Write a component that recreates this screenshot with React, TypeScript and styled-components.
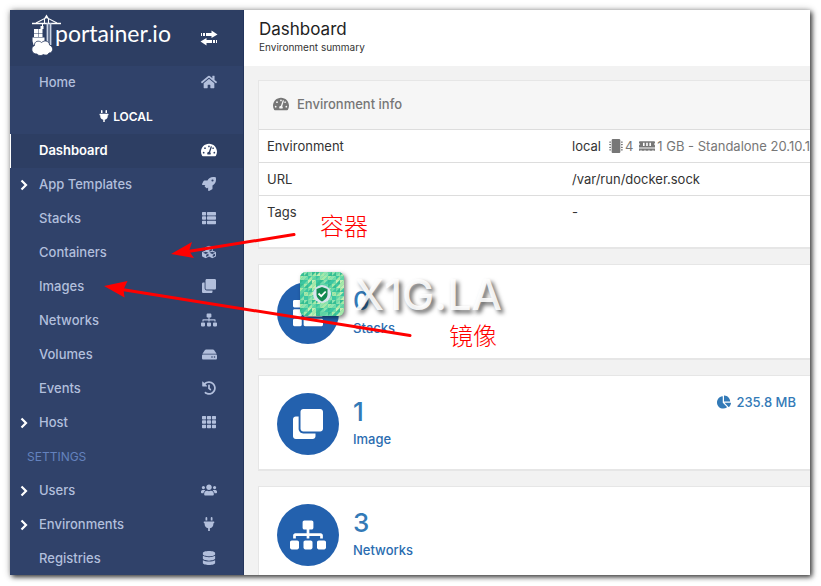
import React from 'react';
import styled, { createGlobalStyle, css } from 'styled-components';
import type { IconType } from 'react-icons';
import {
  FaChartPie,
  FaClone,
  FaCubes,
  FaDatabase,
  FaHdd,
  FaHistory,
  FaHome,
  FaMemory,
  FaMicrochip,
  FaPlug,
  FaRocket,
  FaSitemap,
  FaTachometerAlt,
  FaTh,
  FaThList,
  FaUsers,
} from 'react-icons/fa';

const GlobalStyle = createGlobalStyle`
  * { box-sizing: border-box; }
  body {
    margin: 0;
    background: #fff;
    font-family: Inter, "Noto Sans CJK SC", sans-serif;
    font-size: 13px;
    color: #333;
  }
  a { color: inherit; text-decoration: none; }
`;

const Page = styled.div`
  position: relative;
  height: 100vh;
  padding: 10px 11px 11px 10px;
  overflow: hidden;
`;

const Window = styled.div`
  display: grid;
  grid-template-columns: 234px minmax(0, 1fr);
  height: 100%;
  overflow: hidden;
  background: #f2f2f2;
  box-shadow: 0 0 7px rgba(0, 0, 0, 0.25), 2px 2px 5px rgba(0, 0, 0, 0.75);
`;

const Sidebar = styled.nav`
  overflow: hidden;
  background: #30426a;
  border-right: 1px solid #24355c;
`;

const SidebarHeader = styled.div`
  display: flex;
  align-items: center;
  justify-content: space-between;
  height: 56px;
  padding: 0 25px 0 20px;
  background: #2d3e63;
`;

const Brand = styled.a`
  display: flex;
  align-items: center;
  color: #fff;
`;

const BrandName = styled.span`
  margin: 0 0 10px -7px;
  font: 400 23px/28px Lato, sans-serif;
  color: #fff;
`;

const ToggleButton = styled.button`
  display: flex;
  padding: 0;
  border: 0;
  background: none;
  color: #fff;
`;

const Menu = styled.ul`
  margin: 0;
  padding: 0;
  list-style: none;
`;

const MenuLink = styled.a<{ $active?: boolean }>`
  display: grid;
  grid-template-columns: 19px 1fr 18px;
  align-items: center;
  height: 34px;
  padding: 0 25px 2px 10px;
  font-weight: 500;
  color: #b2bfdc;
  ${({ $active }) =>
    $active &&
    css`
      background: #2d3e63;
      box-shadow: inset 1px 0 #fff;
      font-weight: 600;
      color: #fff;
    `}
  > svg {
    justify-self: center;
  }
`;

const Marker = styled.span`
  display: flex;
  padding-top: 2px;
`;

const Endpoint = styled.li`
  display: flex;
  align-items: center;
  justify-content: center;
  gap: 3px;
  height: 34px;
  padding: 0 2px 2px 0;
  font-size: 12px;
  font-weight: 600;
  color: #fff;
`;

const SectionTitle = styled.li`
  height: 34px;
  padding-left: 17px;
  font-size: 12px;
  line-height: 33px;
  color: #6482be;
`;

const Main = styled.main`
  min-width: 0;
  overflow: hidden;
`;

const PageHeader = styled.header`
  height: 56px;
  padding: 9px 15px;
  background: #fff;
`;

const PageTitle = styled.h1`
  margin: 0;
  font-size: 17px;
  font-weight: 400;
  line-height: 20px;
  color: #222;
`;

const PageSubtitle = styled.div`
  font-size: 10px;
  line-height: 16px;
`;

const Content = styled.div`
  display: flex;
  flex-direction: column;
  gap: 15px;
  padding: 14px 0 0 14px;
`;

const Widget = styled.section`
  background: #fff;
  border: 1px solid #e6e6e6;
  border-right: 0;
  border-bottom: 2px solid #e6e6e6;
`;

const WidgetHeader = styled.h2`
  display: flex;
  align-items: center;
  gap: 8px;
  height: 48px;
  margin: 0;
  padding: 0 14px 2px;
  background: #f6f6f6;
  font-size: 13px;
  font-weight: 500;
  color: #767676;
`;

const InfoTable = styled.table`
  width: 100%;
  table-layout: fixed;
  border-collapse: collapse;
  margin-bottom: 18px;

  th,
  td {
    height: 33px;
    padding: 0 0 0 8px;
    border-top: 1px solid #ddd;
    font-weight: 400;
    text-align: left;
    white-space: nowrap;
    overflow: hidden;
    color: #333;
  }
  th {
    width: 305px;
  }
`;

const Specs = styled.div`
  display: flex;
  align-items: center;
  gap: 2px;
  color: #777;
`;

const SpecName = styled.span`
  margin-right: 6px;
  color: #333;
`;

const SpecValue = styled.span`
  margin-right: 4px;
`;

const StatLink = styled.a`
  display: flex;
  gap: 14px;
  height: 93px;
  padding: 17px 14px 0 18px;
  color: #2a6cb0;
`;

const StatIcon = styled.span`
  display: grid;
  place-items: center;
  flex: none;
  width: 62px;
  height: 62px;
  border-radius: 50%;
  background: #2361ae;
  color: #fff;
`;

const StatText = styled.span`
  display: flex;
  flex: 1;
  flex-direction: column;
  padding-top: 2px;
`;

const StatCount = styled.span`
  font-size: 26px;
  font-weight: 500;
  line-height: 34px;
  color: #337ab7;
`;

const StatLabel = styled.span`
  font-weight: 500;
  line-height: 20px;
`;

const StatNote = styled.span`
  display: flex;
  align-items: center;
  align-self: flex-start;
  gap: 5px;
  font-weight: 500;
  line-height: 18px;
  color: #337ab7;
`;

const Arrows = styled.svg`
  position: absolute;
  top: 0;
  left: 0;
  pointer-events: none;
`;

const Note = styled.span<{ $x: number; $y: number }>`
  position: absolute;
  left: ${({ $x }) => $x}px;
  top: ${({ $y }) => $y}px;
  font: 300 24px/32px "Noto Sans CJK SC", sans-serif;
  color: #f00;
`;

const Watermark = styled.div`
  position: absolute;
  left: 300px;
  top: 269px;
  display: flex;
  align-items: center;
  gap: 10px;
  height: 50px;
  font-size: 43px;
  font-weight: 500;
  color: rgba(255, 255, 255, 0.9);
  text-shadow: 3px 3px 4px rgba(0, 0, 0, 0.6);

  svg {
    filter: drop-shadow(2px 2px 2px rgba(0, 0, 0, 0.5));
  }
`;

const CraneLogo = () => (
  <svg width="32" height="48" viewBox="0 0 32 48" fill="none" stroke="#fff" aria-hidden="true">
    <path d="M2 9.500h29" strokeWidth="1.500" />
    <path d="M6 9 16.500 3.500 27 9M14.500 9V5l2-3.500 2 3.500v4" strokeWidth="1.100" />
    <path d="M17.500 9v22M20.500 9v22" strokeWidth="1.800" stroke="#c9d2e4" />
    <path d="M12.500 10v4" />
    <g fill="#fff" stroke="none">
      <path d="M4 15h4v4H4zM8.500 15h4v4h-4zM4 19.500h4v3.500H4zM8.500 19.500h4v3.500h-4zM10.500 12h3v3h-3z" />
      <path d="M2.500 23.500h12v3.500l-1 4h-10l-1-4z" />
    </g>
    <path
      d="M7 40c-5.500.5-7-7-2.500-8.500C4 27 9 26 11.500 28.500 15 25.500 19.500 27.500 19.500 31c4.500 1.500 4 8-.5 8-1.500 2.500-3.800 2.500-5.500 1.500-2 1.500-5 1.500-6.500-.5z"
      fill="#fff"
      stroke="#2d3e63"
      strokeWidth=".8"
    />
  </svg>
);

const TransferIcon = () => (
  <svg width="18" height="16" viewBox="0 0 18 16" fill="currentColor" aria-hidden="true">
    <path d="M1 3h1v3H1zM3 3h2v3H3zM6 3h5.500V.5L17.500 4.500 11.500 8V6H6zM16 10h1v3h-1zM13 10h2v3h-2zM12 10H6.500V8L.5 11.500l6 4V13H12z" />
  </svg>
);

const Chevron = () => (
  <svg width="8" height="12" viewBox="0 0 8 12" fill="none" stroke="#fff" strokeWidth="2.200" aria-hidden="true">
    <path d="m1.500 1.500 4.500 4.500-4.500 4.500" />
  </svg>
);

const MOSAIC = ['#5fd3a4', '#8fe3b0', '#35bd93', '#c2eeb4', '#6fdbaa', '#3cc6a2', '#a5e8a8'];

const ShieldLogo = () => (
  <svg width="44" height="44" viewBox="0 0 44 44" aria-hidden="true">
    <clipPath id="tile">
      <rect width="44" height="44" rx="6" />
    </clipPath>
    <g clipPath="url(#tile)">
      <rect width="44" height="44" fill="#4ccb98" />
      {Array.from({ length: 121 }, (_, i) => {
        const x = (i % 11) * 4;
        const y = Math.floor(i / 11) * 4;
        return (
          <React.Fragment key={i}>
            <path d={`M${x} ${y}h4l-4 4z`} fill={MOSAIC[(i * i + y) % 7]} />
            <path d={`M${x + 4} ${y}v4h-4z`} fill={MOSAIC[(i * i * 3 + x + 2) % 7]} />
          </React.Fragment>
        );
      })}
    </g>
    <circle cx="22" cy="22" r="9" fill="#d9e4ee" />
    <path d="m22 15 5.500 2v5c0 4-3 6-5.500 7.500-2.500-1.500-5.500-3.500-5.500-7.500v-5z" fill="#128a51" />
    <path d="m18.500 21.500 2.700 2.700 4.500-4.700" fill="none" stroke="#fff" strokeWidth="1.800" />
  </svg>
);

type Entry = { label: string; icon: IconType; size?: number; expandable?: boolean; active?: boolean };

const mainEntries: Entry[] = [
  { label: 'Dashboard', icon: FaTachometerAlt, size: 16, active: true },
  { label: 'App Templates', icon: FaRocket, expandable: true },
  { label: 'Stacks', icon: FaThList },
  { label: 'Containers', icon: FaCubes },
  { label: 'Images', icon: FaClone },
  { label: 'Networks', icon: FaSitemap, size: 16 },
  { label: 'Volumes', icon: FaHdd, size: 15 },
  { label: 'Events', icon: FaHistory },
  { label: 'Host', icon: FaTh, expandable: true },
];

const settingsEntries: Entry[] = [
  { label: 'Users', icon: FaUsers, size: 16, expandable: true },
  { label: 'Environments', icon: FaPlug, expandable: true },
  { label: 'Registries', icon: FaDatabase },
];

const MenuItem = ({ label, icon: Icon, size = 14, expandable, active }: Entry) => (
  <li>
    <MenuLink href="#" $active={active} aria-current={active ? 'page' : undefined}>
      <Marker>{expandable && <Chevron />}</Marker>
      <span>{label}</span>
      <Icon size={size} />
    </MenuLink>
  </li>
);

const stats = [
  { count: 0, label: 'Stacks', icon: FaThList, size: 30 },
  { count: 1, label: 'Image', icon: FaClone, size: 30, note: '235.8 MB' },
  { count: 3, label: 'Networks', icon: FaSitemap, size: 36 },
];

export default function App() {
  return (
    <Page>
      <GlobalStyle />
      <Window>
        <Sidebar>
          <SidebarHeader>
            <Brand href="#">
              <CraneLogo />
              <BrandName>portainer.io</BrandName>
            </Brand>
            <ToggleButton type="button" aria-label="Toggle sidebar">
              <TransferIcon />
            </ToggleButton>
          </SidebarHeader>
          <Menu>
            <MenuItem label="Home" icon={FaHome} size={16} />
            <Endpoint>
              <FaPlug size={12} />
              LOCAL
            </Endpoint>
            {mainEntries.map((entry) => (
              <MenuItem key={entry.label} {...entry} />
            ))}
            <SectionTitle>SETTINGS</SectionTitle>
            {settingsEntries.map((entry) => (
              <MenuItem key={entry.label} {...entry} />
            ))}
          </Menu>
        </Sidebar>
        <Main>
          <PageHeader>
            <PageTitle>Dashboard</PageTitle>
            <PageSubtitle>Environment summary</PageSubtitle>
          </PageHeader>
          <Content>
            <Widget>
              <WidgetHeader>
                <FaTachometerAlt size={16} />
                Environment info
              </WidgetHeader>
              <InfoTable>
                <tbody>
                  <tr>
                    <th scope="row">Environment</th>
                    <td>
                      <Specs>
                        <SpecName>local</SpecName>
                        <FaMicrochip size={14} />
                        <SpecValue>4</SpecValue>
                        <FaMemory size={16} />
                        <span>1 GB - Standalone 20.10.1</span>
                      </Specs>
                    </td>
                  </tr>
                  <tr>
                    <th scope="row">URL</th>
                    <td>/var/run/docker.sock</td>
                  </tr>
                  <tr>
                    <th scope="row">Tags</th>
                    <td>-</td>
                  </tr>
                </tbody>
              </InfoTable>
            </Widget>
            {stats.map(({ count, label, icon: Icon, size, note }) => (
              <Widget key={label}>
                <StatLink href="#">
                  <StatIcon>
                    <Icon size={size} />
                  </StatIcon>
                  <StatText>
                    <StatCount>{count}</StatCount>
                    <StatLabel>{label}</StatLabel>
                  </StatText>
                  {note && (
                    <StatNote>
                      <FaChartPie size={14} />
                      {note}
                    </StatNote>
                  )}
                </StatLink>
              </Widget>
            ))}
          </Content>
        </Main>
      </Window>
      <Watermark>
        <ShieldLogo />
        X1G.LA
      </Watermark>
      <Arrows width="420" height="350" viewBox="0 0 420 350" aria-hidden="true">
        <g stroke="#f00" strokeWidth="3" strokeLinecap="round">
          <path d="M294 234.500 188 251.500" />
          <path d="M410 335.500 122 289.500" />
        </g>
        <path d="m171 254 21-12-3 9 5 7zM104 286l23.500-5-4 8.500 1 8z" fill="#f00" />
      </Arrows>
      <Note $x={320} $y={209}>容器</Note>
      <Note $x={449} $y={319}>镜像</Note>
    </Page>
  );
}
